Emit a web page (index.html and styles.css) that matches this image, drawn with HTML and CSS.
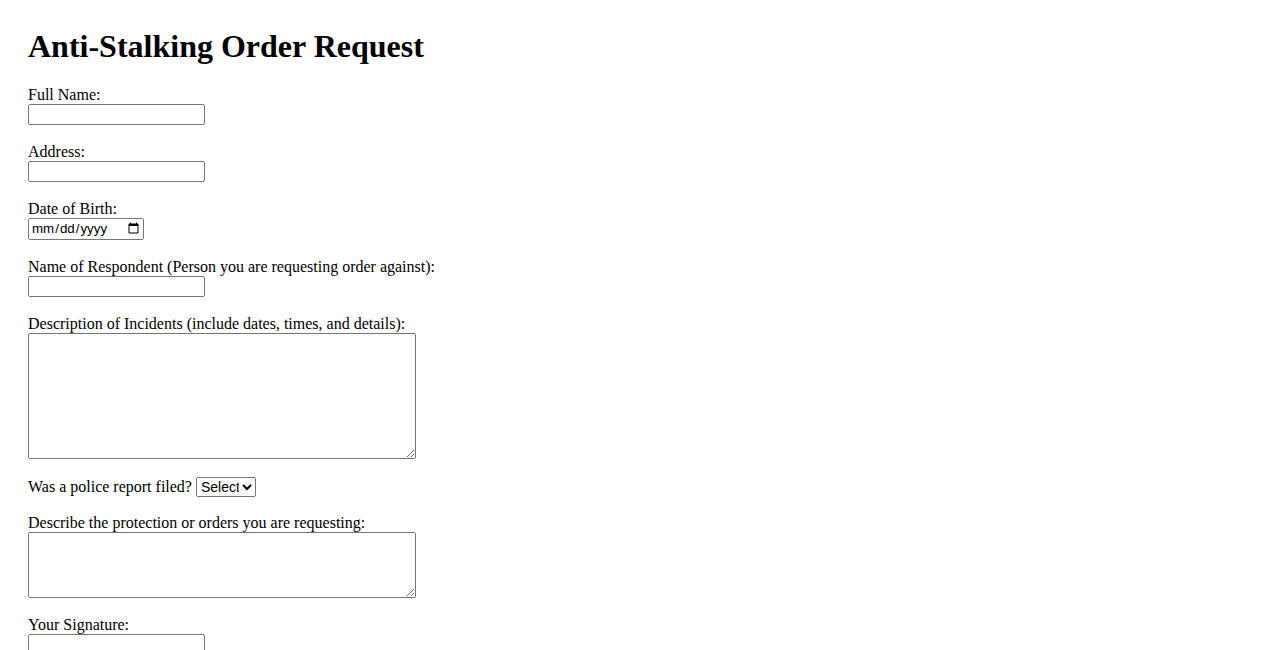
FILE: index.html
```html
<!DOCTYPE html>
<html>
<head>
    <meta charset="utf-8">
    <title>Anti-Stalking Order Request</title>
    <link rel="stylesheet" href="styles.css">
</head>
<body>
    <h1>Anti-Stalking Order Request</h1>
    <form>
        <div class="field">
            <label for="fullname">Full Name:</label>
            <input type="text" id="fullname" name="fullname">
        </div>

        <div class="field">
            <label for="address">Address:</label>
            <input type="text" id="address" name="address">
        </div>

        <div class="field">
            <label for="dob">Date of Birth:</label>
            <input type="date" id="dob" name="dob">
        </div>

        <div class="field">
            <label for="respondent">Name of Respondent (Person you are requesting order against):</label>
            <input type="text" id="respondent" name="respondent">
        </div>

        <div class="field">
            <label for="incidents">Description of Incidents (include dates, times, and details):</label>
            <textarea id="incidents" name="incidents" class="big"></textarea>
        </div>

        <div class="field inline">
            <label for="police">Was a police report filed?</label>
            <select id="police" name="police">
                <option>Select</option>
                <option>Yes</option>
                <option>No</option>
            </select>
        </div>

        <div class="field">
            <label for="protection">Describe the protection or orders you are requesting:</label>
            <textarea id="protection" name="protection" class="small"></textarea>
        </div>

        <div class="field">
            <label for="signature">Your Signature:</label>
            <input type="text" id="signature" name="signature">
        </div>
    </form>
</body>
</html>
```

FILE: styles.css
```css
body{
    margin:0px;
    padding:0px 28px;
    font-family: "Liberation Serif", serif;
    background:#fff;
    color:#000;
}
h1{
    font-size:32px;
    line-height:37px;
    margin:28px 0px 21px 0px;
}
.field{
    margin-bottom:18px;
}
.field label{
    display:block;
    height:18px;
    line-height:18px;
}
.field input, .field textarea{
    display:block;
    box-sizing:border-box;
    margin:0px;
}
.inline{
    display:flex;
    align-items:center;
    gap:4px;
    height:19px;
}
.inline label{
    display:inline;
}
input, select{
    font-family: "Liberation Sans", sans-serif;
    font-size:13.33px;
}
input[type="text"]{
    width:177px;
    height:21px;
}
input[type="date"]{
    width:116px;
    height:22px;
}
select{
    font-size:14px;
    width:60px;
    height:20px;
    margin:0px;
    padding:0px;
}
textarea{
    font-family: "Liberation Mono", monospace;
    width:388px;
}
.big{
    height:126px;
}
.small{
    height:66px;
}
```
